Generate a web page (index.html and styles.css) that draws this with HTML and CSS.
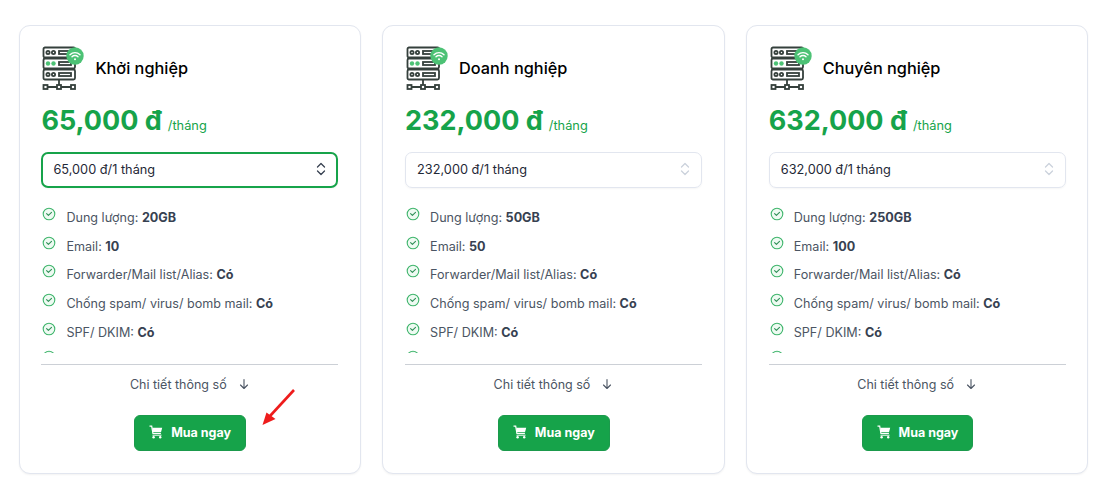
FILE: index.html
```html
<!DOCTYPE html>
<html lang="en">
<head>
    <meta charset="UTF-8">
    <title>Bảng giá Email Hosting</title>
    <link rel="stylesheet" href="styles.css">
</head>
<body>
    <svg class="sprites" width="0" height="0">
        <symbol id="server" viewBox="0 0 42 44">
            <g fill="none" stroke="#35403c" stroke-width="1.8">
                <rect x="1.5" y="1.5" width="31.5" height="10" rx="1.5"/>
                <rect x="1.5" y="12.5" width="31.5" height="10" rx="1.5"/>
                <rect x="1.5" y="23.5" width="31.5" height="10" rx="1.5"/>
                <circle cx="6" cy="6.5" r="1.6"/>
                <circle cx="11.5" cy="6.5" r="1.6"/>
                <rect x="17" y="5" width="12" height="3"/>
                <rect x="17" y="16" width="12" height="3"/>
                <circle cx="6" cy="28.5" r="1.6"/>
                <circle cx="11.5" cy="28.5" r="1.6"/>
                <rect x="17" y="27" width="12" height="3"/>
                <path d="M17 33.5V39M5.5 41H15M19 41h10"/>
                <rect x="1.5" y="39" width="4" height="4"/>
                <rect x="15" y="39" width="4" height="4"/>
                <rect x="29" y="39" width="4" height="4"/>
            </g>
            <circle cx="6" cy="17.5" r="2.2" fill="#4cc275"/>
            <circle cx="11.5" cy="17.5" r="2.2" fill="#4cc275"/>
            <circle cx="33" cy="10" r="8.7" fill="#4cc275"/>
            <g fill="none" stroke="#fff" stroke-width="1.4" stroke-linecap="round">
                <path d="M28 8.7a7 7 0 0 1 10 0"/>
                <path d="M30 10.8a4.2 4.2 0 0 1 6 0"/>
            </g>
            <circle cx="33" cy="13.3" r="1" fill="#fff"/>
        </symbol>
        <symbol id="check" viewBox="0 0 14 14">
            <circle cx="7" cy="7" r="5.8" fill="#eefaf2" stroke="#3fb56c" stroke-width="1.1"/>
            <path d="M4.6 6.6 6.4 8.4 9.5 5.4" fill="none" stroke="#2f8f57" stroke-width="1.1" stroke-linecap="round" stroke-linejoin="round"/>
        </symbol>
        <symbol id="chevrons" viewBox="0 0 12 16">
            <path d="M2.5 6 6 2.5 9.5 6M2.5 10 6 13.5 9.5 10" fill="none" stroke="currentColor" stroke-width="1.3" stroke-linecap="round" stroke-linejoin="round"/>
        </symbol>
        <symbol id="arrow-down" viewBox="0 0 12 12">
            <path d="M6 1.5v9M2.5 7 6 10.5 9.5 7" fill="none" stroke="currentColor" stroke-width="1.1" stroke-linecap="round" stroke-linejoin="round"/>
        </symbol>
        <symbol id="cart" viewBox="0 0 14 14">
            <path d="M.5 1.2h2.2l1.2 7.3h8" fill="none" stroke="#fff" stroke-width="1.2"/>
            <path d="M3.2 2.8h10l-1.2 4.4H4z" fill="#fff"/>
            <path d="M3.5 10.2h9" stroke="#fff" stroke-width="1"/>
            <circle cx="4.6" cy="12.3" r="1.2" fill="#fff"/>
            <circle cx="11.2" cy="12.3" r="1.2" fill="#fff"/>
        </symbol>
    </svg>

    <div class="plans">
        <div class="card">
            <div class="card-head">
                <svg class="head-icon"><use href="#server"/></svg>
                <h3>Khởi nghiệp</h3>
            </div>
            <div class="price"><strong>65,000 đ</strong><span>/tháng</span></div>
            <div class="select active">
                <span>65,000 đ/1 tháng</span>
                <svg class="chevrons"><use href="#chevrons"/></svg>
            </div>
            <ul class="features">
                <li><svg class="check"><use href="#check"/></svg><span>Dung lượng: <b>20GB</b></span></li>
                <li><svg class="check"><use href="#check"/></svg><span>Email: <b>10</b></span></li>
                <li><svg class="check"><use href="#check"/></svg><span>Forwarder/Mail list/Alias: <b>Có</b></span></li>
                <li><svg class="check"><use href="#check"/></svg><span>Chống spam/ virus/ bomb mail: <b>Có</b></span></li>
                <li><svg class="check"><use href="#check"/></svg><span>SPF/ DKIM: <b>Có</b></span></li>
                <li><svg class="check"><use href="#check"/></svg></li>
            </ul>
            <div class="details">Chi tiết thông số <svg class="arrow-down"><use href="#arrow-down"/></svg></div>
            <div class="buy-row">
                <button class="buy"><svg class="cart"><use href="#cart"/></svg>Mua ngay</button>
                <!-- red annotation arrow from the screenshot -->
                <svg class="annotation" width="36" height="40" viewBox="0 0 36 40">
                    <path d="M32 2 8 28" stroke="#ee1c1c" stroke-width="2.6" fill="none"/>
                    <path d="M.5 37 4.5 24.5 13.5 31z" fill="#ee1c1c"/>
                </svg>
            </div>
        </div>

        <div class="card">
            <div class="card-head">
                <svg class="head-icon"><use href="#server"/></svg>
                <h3>Doanh nghiệp</h3>
            </div>
            <div class="price"><strong>232,000 đ</strong><span>/tháng</span></div>
            <div class="select">
                <span>232,000 đ/1 tháng</span>
                <svg class="chevrons"><use href="#chevrons"/></svg>
            </div>
            <ul class="features">
                <li><svg class="check"><use href="#check"/></svg><span>Dung lượng: <b>50GB</b></span></li>
                <li><svg class="check"><use href="#check"/></svg><span>Email: <b>50</b></span></li>
                <li><svg class="check"><use href="#check"/></svg><span>Forwarder/Mail list/Alias: <b>Có</b></span></li>
                <li><svg class="check"><use href="#check"/></svg><span>Chống spam/ virus/ bomb mail: <b>Có</b></span></li>
                <li><svg class="check"><use href="#check"/></svg><span>SPF/ DKIM: <b>Có</b></span></li>
                <li><svg class="check"><use href="#check"/></svg></li>
            </ul>
            <div class="details">Chi tiết thông số <svg class="arrow-down"><use href="#arrow-down"/></svg></div>
            <div class="buy-row">
                <button class="buy"><svg class="cart"><use href="#cart"/></svg>Mua ngay</button>
            </div>
        </div>

        <div class="card">
            <div class="card-head">
                <svg class="head-icon"><use href="#server"/></svg>
                <h3>Chuyên nghiệp</h3>
            </div>
            <div class="price"><strong>632,000 đ</strong><span>/tháng</span></div>
            <div class="select">
                <span>632,000 đ/1 tháng</span>
                <svg class="chevrons"><use href="#chevrons"/></svg>
            </div>
            <ul class="features">
                <li><svg class="check"><use href="#check"/></svg><span>Dung lượng: <b>250GB</b></span></li>
                <li><svg class="check"><use href="#check"/></svg><span>Email: <b>100</b></span></li>
                <li><svg class="check"><use href="#check"/></svg><span>Forwarder/Mail list/Alias: <b>Có</b></span></li>
                <li><svg class="check"><use href="#check"/></svg><span>Chống spam/ virus/ bomb mail: <b>Có</b></span></li>
                <li><svg class="check"><use href="#check"/></svg><span>SPF/ DKIM: <b>Có</b></span></li>
                <li><svg class="check"><use href="#check"/></svg></li>
            </ul>
            <div class="details">Chi tiết thông số <svg class="arrow-down"><use href="#arrow-down"/></svg></div>
            <div class="buy-row">
                <button class="buy"><svg class="cart"><use href="#cart"/></svg>Mua ngay</button>
            </div>
        </div>
    </div>
</body>
</html>
```

FILE: styles.css
```css
html, body {
    height: 100%;
}
body {
    font-family: Inter, "Noto Sans", sans-serif;
    margin: 0;
    background-color: #fff;
    overflow: hidden;
}
.sprites {
    display: block;
    height: 0;
}
.plans {
    display: grid;
    grid-template-columns: repeat(3, 342.2px);
    column-gap: 21.5px;
    padding: 25px 0 0 18.7px;
}
.card {
    box-sizing: border-box;
    height: 449px;
    padding: 19px 21.7px 0;
    background: #fff;
    border: 1px solid #e2e6ef;
    border-radius: 11px;
    box-shadow: 0 1px 2px rgba(0,0,0,0.05);
}
.card-head {
    display: flex;
    align-items: center;
    height: 46px;
}
.head-icon {
    width: 42px;
    height: 44px;
    margin-left: 1px;
    margin-right: 11px;
    flex-shrink: 0;
}
.card-head h3 {
    margin: 0;
    font-size: 16.3px;
    font-weight: 500;
    color: #000;
}
.price {
    display: flex;
    align-items: baseline;
    margin-top: 13px;
    color: #16a34a;
    height: 40px;
}
.price strong {
    font-size: 27px;
    font-weight: 700;
}
.price span {
    font-size: 12.8px;
    margin-left: 6px;
}
.select {
    box-sizing: border-box;
    height: 36px;
    margin-top: 8px;
    padding: 0 10px 2px 11px;
    display: flex;
    align-items: center;
    justify-content: space-between;
    font-size: 12.75px;
    color: #1f2937;
    border: 1px solid #e2e6ef;
    border-radius: 7px;
    box-shadow: 0 1px 2px rgba(0,0,0,0.04);
}
.select.active {
    border: 2px solid #16a34a;
    padding: 0 9px 2px 10px;
}
.chevrons {
    width: 12px;
    height: 16px;
    color: #cbd2dc;
}
.select.active .chevrons {
    color: #374151;
}
.features {
    list-style: none;
    margin: 18px 0 11px;
    padding: 0;
    height: 147px;
    overflow: hidden;
    font-size: 12.6px;
    color: #4b5563;
}
.features li {
    display: flex;
    height: 28.7px;
    align-items: flex-start;
}
.features li span {
    padding-top: 4px;
}
.features b {
    font-weight: 700;
    color: #374151;
}
.check {
    width: 14px;
    height: 14px;
    margin-left: 1px;
    margin-right: 10px;
    margin-top: 1px;
    flex-shrink: 0;
}
.details {
    box-sizing: content-box;
    padding-top: 10px;
    border-top: 1px solid #ccd0d6;
    display: flex;
    justify-content: center;
    align-items: center;
    font-size: 12.5px;
    color: #4b5563;
    height: 18px;
}
.arrow-down {
    width: 12px;
    height: 12px;
    margin-left: 11px;
    color: #4b5563;
}
.buy-row {
    position: relative;
    display: flex;
    justify-content: center;
    margin-top: 22px;
}
.buy {
    display: flex;
    align-items: center;
    justify-content: center;
    width: 111.6px;
    height: 36px;
    margin-left: 0.6px;
    padding: 0 0 2px;
    font-family: inherit;
    font-size: 12.5px;
    font-weight: 700;
    color: #fff;
    background-color: #16a34a;
    border: 1px solid #1b9a4c;
    border-radius: 6px;
    cursor: pointer;
}
.cart {
    width: 14px;
    height: 14px;
    margin-right: 8px;
}
.annotation {
    position: absolute;
    left: 221px;
    top: -27px;
}
```
